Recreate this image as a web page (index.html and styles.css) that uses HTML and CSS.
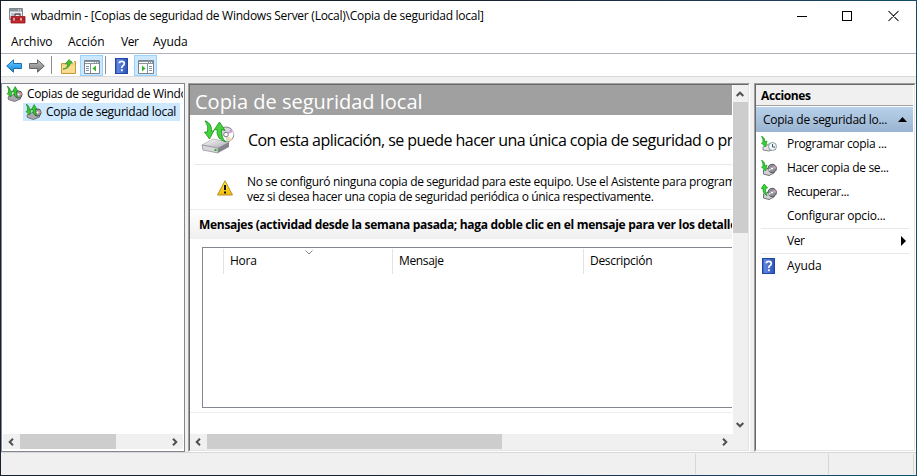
FILE: index.html
```html
<!DOCTYPE html>
<html lang="es">
<head>
<meta charset="utf-8">
<title>wbadmin</title>
<link rel="stylesheet" href="styles.css">
</head>
<body>
<svg class="defs" width="0" height="0">
  <defs>
    <linearGradient id="blue" x2="0" y2="1"><stop stop-color="#7fd3ff"/><stop offset=".5" stop-color="#3aaaf0"/><stop offset="1" stop-color="#1683d0"/></linearGradient>
    <linearGradient id="grey" x2="0" y2="1"><stop stop-color="#c4c4c4"/><stop offset="1" stop-color="#757575"/></linearGradient>
    <linearGradient id="help" x2="1" y2="0"><stop stop-color="#1c3fa8"/><stop offset=".2" stop-color="#5f86e0"/><stop offset="1" stop-color="#2a50b8"/></linearGradient>
    <linearGradient id="warn" x2="0" y2="1"><stop stop-color="#fff04d"/><stop offset="1" stop-color="#f0b90c"/></linearGradient>
    <linearGradient id="metal" x2="1" y2="1"><stop stop-color="#fff"/><stop offset="1" stop-color="#a9a9b2"/></linearGradient>
    <symbol id="backup" viewBox="0 0 34 34">
      <ellipse cx="25" cy="14.500" rx="7.800" ry="7.500" fill="#d9d9df" stroke="#85858f"/>
      <path d="M25 14.500 32 10q2 5-2 9zM25 14.500l-7 5q3 4 7 3z" fill="#fff"/>
      <path d="M25 14.500l5-5.500 2 3z" fill="#cf9fd4"/><path d="M25 14.500l6 5-3 2z" fill="#eee3a4"/>
      <circle cx="25" cy="14.500" r="2.300" fill="#fff" stroke="#77777f"/>
      <path d="M1 25 12 19 28 22 17 28z" fill="url(#metal)" stroke="#aaa" stroke-width=".7"/>
      <path d="M1 25 17 28V33L2 30z" fill="#d7d7dc" stroke="#888890" stroke-width=".7"/>
      <path d="M17 28 28 22V27L17 33z" fill="#85858d"/>
      <path d="M14.500 29v2" stroke="#19bc19" stroke-width="2"/>
      <path d="M4 .8Q11 3 10.500 11.500l2.500-1L8.500 19 3.500 12l3 0Q8 6 4 .8z" fill="#43d43a" stroke="#168e18" stroke-width=".8"/>
      <path d="M25 22Q20 18 20.500 9.500l3.500 1L18.500 2 13 10l3-.500Q15 19 25 22z" fill="#43d43a" stroke="#168e18" stroke-width=".8"/>
    </symbol>
    <symbol id="backup-small" viewBox="0 0 16 16">
      <path d="M1.500 11 8 8l6 2v3l-6 2.500-6-2z" fill="#a9a9ae" stroke="#606068" stroke-width=".8"/>
      <circle cx="12" cy="8.500" r="3.600" fill="#98979f" stroke="#55545e"/>
      <path d="m12 8.500 2.500-2.500 1 3z" fill="#e29a98"/><circle cx="12" cy="8.500" r="1" fill="#fff"/>
      <path d="M.8 0q3.500 2 3.200 5.500l2-.500L4 11 .5 7.500l1.500-.500Q2.500 3 .8 0z" fill="#31cc2c" stroke="#16751a" stroke-width=".6"/>
      <path d="M11.500 12Q9.500 9 10 5.500h1.500L8.700.5 6 5.500h1.500Q6.500 10 11.500 12z" fill="#31cc2c" stroke="#16751a" stroke-width=".6"/>
    </symbol>
    <symbol id="drive-disc" viewBox="0 0 16 16">
      <path d="M2.500 10 8 8l5 2v3l-5 2.500-5.500-1.500z" fill="#d2d2d6" stroke="#606068" stroke-width=".9"/>
      <circle cx="11.200" cy="8.500" r="4.200" fill="#8f8e99" stroke="#55545e"/>
      <path d="m11 8.500 3-3 1 3z" fill="#dfa6ad"/><path d="m11 8.500-3 3-1-2z" fill="#d8d8e0"/><circle cx="11" cy="8.500" r="1.100" fill="#fff"/>
    </symbol>
    <symbol id="green-down" viewBox="0 0 16 16"><path d="M.5 0q4 2 3.500 6L6 5 4.500 11 .5 7l1.500-.500Q2.500 3 .5 0z" fill="#31d82c" stroke="#16951a" stroke-width=".7"/></symbol>
    <symbol id="green-up" viewBox="0 0 16 16"><path d="M6 12Q1 9 2 4.500H.2L3.300 0 6.500 4 4.700 4.500Q4 8 6 12z" fill="#31d82c" stroke="#16951a" stroke-width=".7"/></symbol>
    <symbol id="help-book" viewBox="0 0 13 16">
      <rect width="13" height="16" fill="url(#help)"/><path d="M.5.500h12v15H.5z" fill="none" stroke="#2346a5"/>
      <path d="M4.300 5.300Q4.300 3.300 6.800 3.300T9.300 5.500Q9.300 7 7.800 7.800 6.800 8.400 6.800 10" fill="none" stroke="#fff" stroke-width="1.700"/><path d="M5.900 11.300h1.900v1.900H5.900z" fill="#fff"/>
    </symbol>
    <symbol id="chev" viewBox="0 0 8 6"><path d="M.7 5 4 1.700 7.300 5" fill="none" stroke="#505050" stroke-width="2"/></symbol>
  </defs>
</svg>

<div class="window">
  <header class="titlebar">
    <svg class="app-icon" width="17" height="16" viewBox="0 0 17 16">
      <path d="M.5.500h13v11H.5z" fill="#e9edf0" stroke="#7e868c"/><path d="M1 1h12v2.500H1z" fill="#87929a"/><path d="M9 2h1m1 0h1" stroke="#fff"/><path d="M2 6h10M2 8h4" stroke="#7e99aa"/>
      <path d="M6 8V6h5v2" fill="none" stroke="#5a2222"/><path d="M2 8.500h14V15H2z" fill="#c5292e" stroke="#8c1519" stroke-width=".8"/><path d="M2 11h14" stroke="#8c1519"/><path d="M5 10v2.500m7-2.500v2.500" stroke="#eee" stroke-width="1.300"/>
    </svg>
    <span class="caption">wbadmin - [Copias de seguridad de Windows Server (Local)\Copia de seguridad local]</span>
    <svg class="controls" width="120" height="12" viewBox="0 0 120 12"><path d="M5 6.500h10M50.500 1.500h9v9h-9zM96.500 1l10 10m0-10-10 10" fill="none" stroke="#000" stroke-width="1.050"/></svg>
  </header>
  <nav class="menubar"><span class="m-file">Archivo</span><span class="m-action">Acción</span><span class="m-view">Ver</span><span class="m-help">Ayuda</span></nav>
  <div class="toolbar">
    <svg class="t-back" width="16" height="14" viewBox="0 0 16 14"><path d="M.7 7 7.500.8v3.700h8v5h-8v3.700z" fill="url(#blue)" stroke="#1a6fae"/></svg>
    <svg class="t-next" width="16" height="14" viewBox="0 0 16 14"><path d="M15.300 7 8.500.8v3.700h-8v5h8v3.700z" fill="url(#grey)" stroke="#666"/></svg>
    <i class="t-sep"></i>
    <svg class="t-up" width="15" height="15" viewBox="0 0 15 15"><path d="M.5 4.500h5l1-2h8v12H.5z" fill="#f1d27c" stroke="#c59a3d"/><path d="M1 6.500h13v7H1z" fill="#f8dd91"/><path d="M11 1.500H13V4h-2z" fill="#fff"/><path d="M2 10q4 0 5-5H4.500L8 .5 11.500 4H9.500Q8 10 2 10z" fill="#43bf35" stroke="#278e24" stroke-width=".7"/></svg>
    <span class="t-toggle"><svg width="16" height="14" viewBox="0 0 16 14"><path d="M.5.500h15v13H.5z" fill="#fff" stroke="#78838c"/><path d="M1 1h14v3H1z" fill="#8b969f"/><path d="M1 2.500h9M11 2.500h1m1 0h1" stroke="#fff"/><path d="M2 6.500h3M2 8.500h3M2 10.500h3M6.500 4v9" stroke="#8292a0"/><path d="M12 5.500v6L8.500 8.500z" fill="#34b52c"/></svg></span>
    <i class="t-sep t-sep-2"></i>
    <svg class="t-help" width="13" height="16"><use href="#help-book"/></svg>
    <span class="t-toggle"><svg width="16" height="14" viewBox="0 0 16 14"><path d="M.5.500h15v13H.5z" fill="#fff" stroke="#78838c"/><path d="M1 1h14v3H1z" fill="#8b969f"/><path d="M1 2.500h9M11 2.500h1m1 0h1" stroke="#fff"/><path d="M11 6.500h3M11 8.500h3M11 10.500h3M9.500 4v9" stroke="#8292a0"/><path d="M4 5.500v6l3.500-3z" fill="#34b52c"/></svg></span>
  </div>

  <main class="panes">
    <aside class="tree">
      <div class="tree-body">
        <div class="node"><svg width="17" height="16"><use href="#backup-small"/></svg><span class="root-text">Copias de seguridad de Windows</span></div>
        <div class="node selected"><svg width="17" height="16"><use href="#backup-small"/></svg><span>Copia de seguridad local</span></div>
      </div>
      <div class="hscroll"><svg class="left" width="8" height="6"><use href="#chev"/></svg><i class="thumb"></i><svg class="right" width="8" height="6"><use href="#chev"/></svg></div>
    </aside>

    <section class="center">
      <div class="view">
        <div class="content">
          <h1>Copia de seguridad local</h1>
          <div class="intro"><svg width="34" height="34"><use href="#backup"/></svg><span>Con esta aplicación, se puede hacer una única copia de seguridad o programar</span></div>
          <div class="notice">
            <svg width="16" height="16" viewBox="0 0 16 16"><path d="M8 .8 15.500 15H.5z" fill="url(#warn)" stroke="#b98e20" stroke-linejoin="round"/><path d="M8 5v5M8 11.500v2" stroke="#111" stroke-width="2"/></svg>
            <p><span class="line-1">No se configuró ninguna copia de seguridad para este equipo. Use el Asistente para programar</span><br><span class="line-2">vez si desea hacer una copia de seguridad periódica o única respectivamente.</span></p>
          </div>
          <h2>Mensajes (actividad desde la semana pasada; haga doble clic en el mensaje para ver los detalles)</h2>
          <div class="list-wrap"><div class="list">
            <div class="columns"><span class="c-icon"></span><span class="c-time">Hora<svg class="sort" width="8" height="5" viewBox="0 0 8 5"><path d="M.5.500 4 4 7.500.500" fill="none" stroke="#888"/></svg></span><span class="c-msg">Mensaje</span><span class="c-desc">Descripción</span></div>
          </div></div>
        </div>
        <div class="vscroll"><svg class="up" width="8" height="6"><use href="#chev"/></svg><i class="vthumb"></i><svg class="down" width="8" height="6"><use href="#chev"/></svg></div>
      </div>
      <div class="hscroll wide"><svg class="left" width="8" height="6"><use href="#chev"/></svg><i class="thumb"></i><svg class="right" width="8" height="6"><use href="#chev"/></svg></div>
    </section>

    <aside class="actions">
      <h3>Acciones</h3>
      <div class="group"><span>Copia de seguridad lo...</span><svg width="9" height="5"><path d="M0 5 4.500 0 9 5z"/></svg></div>
      <div class="action"><svg width="16" height="16"><path d="M2 11 8 8l5 2v3l-5 2-6-1z" fill="#e3e3e6" stroke="#85858c"/><circle cx="11.500" cy="10.500" r="4" fill="#edf6f8" stroke="#849aa2"/><path d="M11.500 8v3h2.500" fill="none" stroke="#456"/><use href="#green-down"/></svg><span class="a1">Programar copia ...</span></div>
      <div class="action"><svg width="16" height="16"><use href="#drive-disc"/><use href="#green-down"/></svg><span class="a2">Hacer copia de se...</span></div>
      <div class="action"><svg width="16" height="16"><use href="#drive-disc"/><use href="#green-up"/></svg><span class="a3">Recuperar...</span></div>
      <div class="action"><i class="blank"></i><span class="a4">Configurar opcio...</span></div>
      <hr>
      <div class="action"><i class="blank"></i><span class="a5">Ver</span><svg class="more" width="5" height="10"><path d="M0 0 5 5 0 10z"/></svg></div>
      <hr>
      <div class="action"><svg class="book" width="13" height="16"><use href="#help-book"/></svg><span class="a6">Ayuda</span></div>
    </aside>
  </main>
  <footer class="status"><span class="s1"></span><span class="s2"></span><span class="s3"></span></footer>
</div>
</body>
</html>
```
FILE: styles.css
```css
* { box-sizing: border-box; }
body { margin: 0; overflow: hidden; background: #f0f0f0; color: #000; font: 12px/16px "Open Sans", "Noto Sans", sans-serif; letter-spacing: -.27px; white-space: nowrap; }
svg { display: block; flex: none; }
h1, h2, h3, p { margin: 0; }
.defs { position: absolute; }
.window { width: 917px; height: 476px; padding: 1px; display: flex; flex-direction: column; background: linear-gradient(100deg, #17202c 45%, #203a5c 75%, #0c5468 96%); }

.titlebar { height: 30px; flex: none; background: #fff; display: flex; align-items: center; padding: 0 4px 0 8px; }
.caption { margin-left: 5px; flex: 1; letter-spacing: -.26px; }
.menubar { height: 22px; flex: none; background: #fff; display: flex; align-items: center; padding-left: 10px; letter-spacing: 0; }
.m-file { width: 57px; letter-spacing: -.05px; }
.m-action { width: 53px; }
.m-view { width: 32px; letter-spacing: -.4px; }
.m-help { letter-spacing: -.1px; }
.toolbar { height: 24px; flex: none; background: #fff; border-top: 1px solid #b1b1bb; border-bottom: 1px solid #dadada; display: flex; align-items: center; padding-left: 5px; }
.toolbar > svg { position: relative; top: 1px; }
.t-next { margin-left: 7px; }
.t-sep { width: 1px; height: 18px; background: #8d8d8d; margin-left: 6px; }
.t-sep-2 { margin-left: 2px; }
.t-up { margin-left: 9px; }
.t-toggle { width: 23px; height: 21px; margin-left: 4px; border: 1px solid #99d1ff; background: #cce8ff; display: flex; align-items: center; justify-content: center; padding-top: 3px; }
.t-help { margin-left: 9px; }
.t-help + .t-toggle { margin-left: 6px; }

.panes { height: 375px; flex: none; background: #f0f0f0; display: flex; padding: 6px 0 0; }
.tree { width: 184px; height: 369px; background: #fff; border: 1px solid #828790; padding: 1px; display: flex; flex-direction: column; }
.tree-body { flex: 1; overflow: hidden; }
.node { height: 18px; margin-left: 3px; display: flex; align-items: center; }
.node span { margin-left: 4px; }
.root-text { letter-spacing: -.34px; width: 156px; overflow: hidden; }
.node.selected { margin-left: 20px; width: 157px; background: #cde8ff; padding-left: 2px; }
.hscroll { height: 15px; margin-bottom: 1px; background: #f0f0f0; display: flex; align-items: center; }
.hscroll .thumb { width: 96px; height: 15px; background: #cdcdcd; margin: 0 auto 0 5px; }
.left { transform: rotate(-90deg); margin-left: 4px; }
.right { transform: rotate(90deg); margin-right: 4px; }

.center { width: 562px; height: 369px; margin-left: 3px; border: 1px solid; border-color: #a0a0a0 #fff #fff #a0a0a0; background: #f0f0f0; display: flex; flex-direction: column; position: relative; }
.center::before, .actions::before { content: ""; position: absolute; inset: 0; border: 1px solid; border-color: #696969 #e3e3e3 #e3e3e3 #696969; pointer-events: none; }
.view { height: 350px; display: flex; padding: 1px 0 0 1px; }
.content { width: 543px; overflow: hidden; background: #fff; border-right: 1px solid #fff; }
h1 { height: 30px; background: #a0a0a0; color: #fff; font-size: 20px; font-weight: 400; line-height: 33px; padding-left: 5px; letter-spacing: 0; }
.intro { height: 50px; display: flex; align-items: center; margin-left: 4px; padding: 0 0 5px 7px; border-bottom: 1px solid #e8e8e8; font-size: 16px; letter-spacing: -.55px; }
.intro span { margin-left: 13px; padding-top: 5px; }
.notice { height: 45px; border-bottom: 1px solid #ececec; display: flex; padding-left: 27px; }
.notice svg { margin-top: 15px; }
.notice p { margin: 9px 0 0 14px; line-height: 15px; }
.line-1 { letter-spacing: -.34px; }
.line-2 { letter-spacing: -.35px; }
h2 { height: 29px; background: linear-gradient(#fff, #efefef); font-size: 12px; line-height: 30px; padding-left: 9px; letter-spacing: -.3px; }
.list-wrap { height: 174px; padding: 8px 0 4px 12px; border-bottom: 1px solid #eee; }
.list { width: 640px; height: 161px; border: 1px solid #828790; padding-top: 1px; }
.columns { height: 25px; display: flex; line-height: 24px; }
.columns span { border-right: 1px solid #e3e3e3; padding-left: 6px; position: relative; }
.c-icon { width: 21px; }
.c-time { width: 169px; }
.c-msg { width: 191px; letter-spacing: -.35px; }
.c-desc { width: 220px; letter-spacing: -.3px; }
.sort { position: absolute; left: 81px; top: 1px; }
.vscroll { flex: 1; height: 349px; display: flex; flex-direction: column; align-items: flex-start; padding: 6px 0 6px; }
.up { margin: 0 0 5px 3px; }
.vthumb { width: 15px; height: 131px; background: #cdcdcd; }
.down { transform: rotate(180deg); margin: auto 0 0 3px; }
.wide { margin-left: 1px; }
.wide .thumb { width: 295px; }
.wide .right { margin-right: 20px; }

.actions { width: 162px; height: 369px; margin-left: 4px; background: #fff; border: 1px solid; border-color: #a0a0a0 #fff #fff #a0a0a0; padding: 1px 2px 1px 1px; position: relative; }
h3 { height: 21px; font-size: 12px; line-height: 22px; padding-left: 5px; background: #f0f0f0; border-bottom: 1px solid #a0a0a0; letter-spacing: -.4px; }
.group { height: 25px; margin-top: 1px; padding: 0 6px 0 7px; background: linear-gradient(#b9d1ea, #99b4d1); display: flex; align-items: center; justify-content: space-between; }
.action { height: 24px; display: flex; align-items: center; padding-left: 5px; }
.action span { margin-left: 10px; }
.action .book { margin: 0 2px 0 1px; }
.blank { width: 16px; }
.action .a1, .action .a2 { letter-spacing: -.33px; }
.action .a3 { letter-spacing: -.45px; }
.action .a4 { letter-spacing: -.22px; }
.action .a5 { letter-spacing: -.5px; }
.action .a6 { letter-spacing: -.1px; }
.more { margin-left: auto; margin-right: 7px; }
hr { height: 1px; border: 0; margin: 0 4px 0 5px; background: #e8e8e8; }

.status { flex: 1; background: #f0f0f0; border-top: 1px solid #d7d7d7; display: flex; padding: 1px 2px 1px 0; }
.status span { border-right: 1px solid #d7d7d7; }
.s1 { width: 695px; }
.s2 { width: 133px; }
.s3 { flex: 1; }
```
